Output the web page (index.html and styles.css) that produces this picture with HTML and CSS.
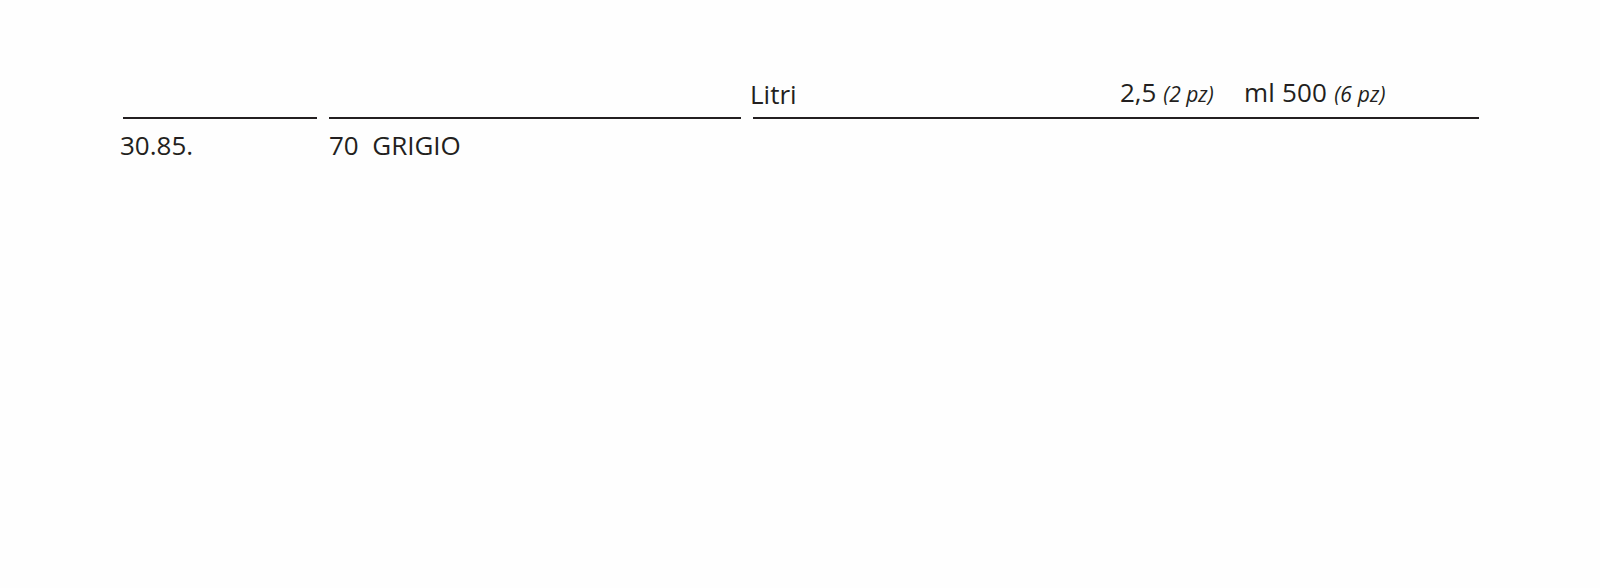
FILE: index.html
```html
<!DOCTYPE html>
<html lang="it">
<head>
<meta charset="utf-8">
<link rel="stylesheet" href="styles.css">
</head>
<body>
<div class="sheet">
  <div class="table">
    <div class="head c1"></div>
    <div class="head c2"></div>
    <div class="head c3">
      <span class="unit">Litri</span>
      <span class="size s1">2,5 <i>(2 pz)</i></span>
      <span class="size s2">ml 500 <i>(6 pz)</i></span>
    </div>
    <div class="cell code">30.85.</div>
    <div class="cell name">70&nbsp; GRIGIO</div>
    <div class="cell"></div>
  </div>
</div>
</body>
</html>
```
FILE: styles.css
```css
html, body {
  margin: 0;
  padding: 0;
  background: #fefefe;
}
body {
  font-family: "Open Sans", "Noto Sans", sans-serif;
  color: #231f20;
  width: 1600px;
  height: 588px;
}
.sheet {
  padding: 80px 0 0 123px;
}
.table {
  display: grid;
  grid-template-columns: 194px 412px 726px;
  column-gap: 12px;
}
.head {
  height: 39px;
  border-bottom: 2px solid #231f20;
  box-sizing: border-box;
  display: flex;
  align-items: flex-end;
  font-size: 26px;
  line-height: 30px;
  padding-bottom: 8px;
}
.c3 .unit {
  margin-left: -3px;
  width: 370px;
}
.size i {
  font-size: 21px;
}
.s1 {
  width: 124px;
}
.s2 {
  letter-spacing: 0.2px;
}
.cell {
  font-size: 26px;
  line-height: 30px;
  padding-top: 11px;
}
.code {
  margin-left: -3px;
}
```
